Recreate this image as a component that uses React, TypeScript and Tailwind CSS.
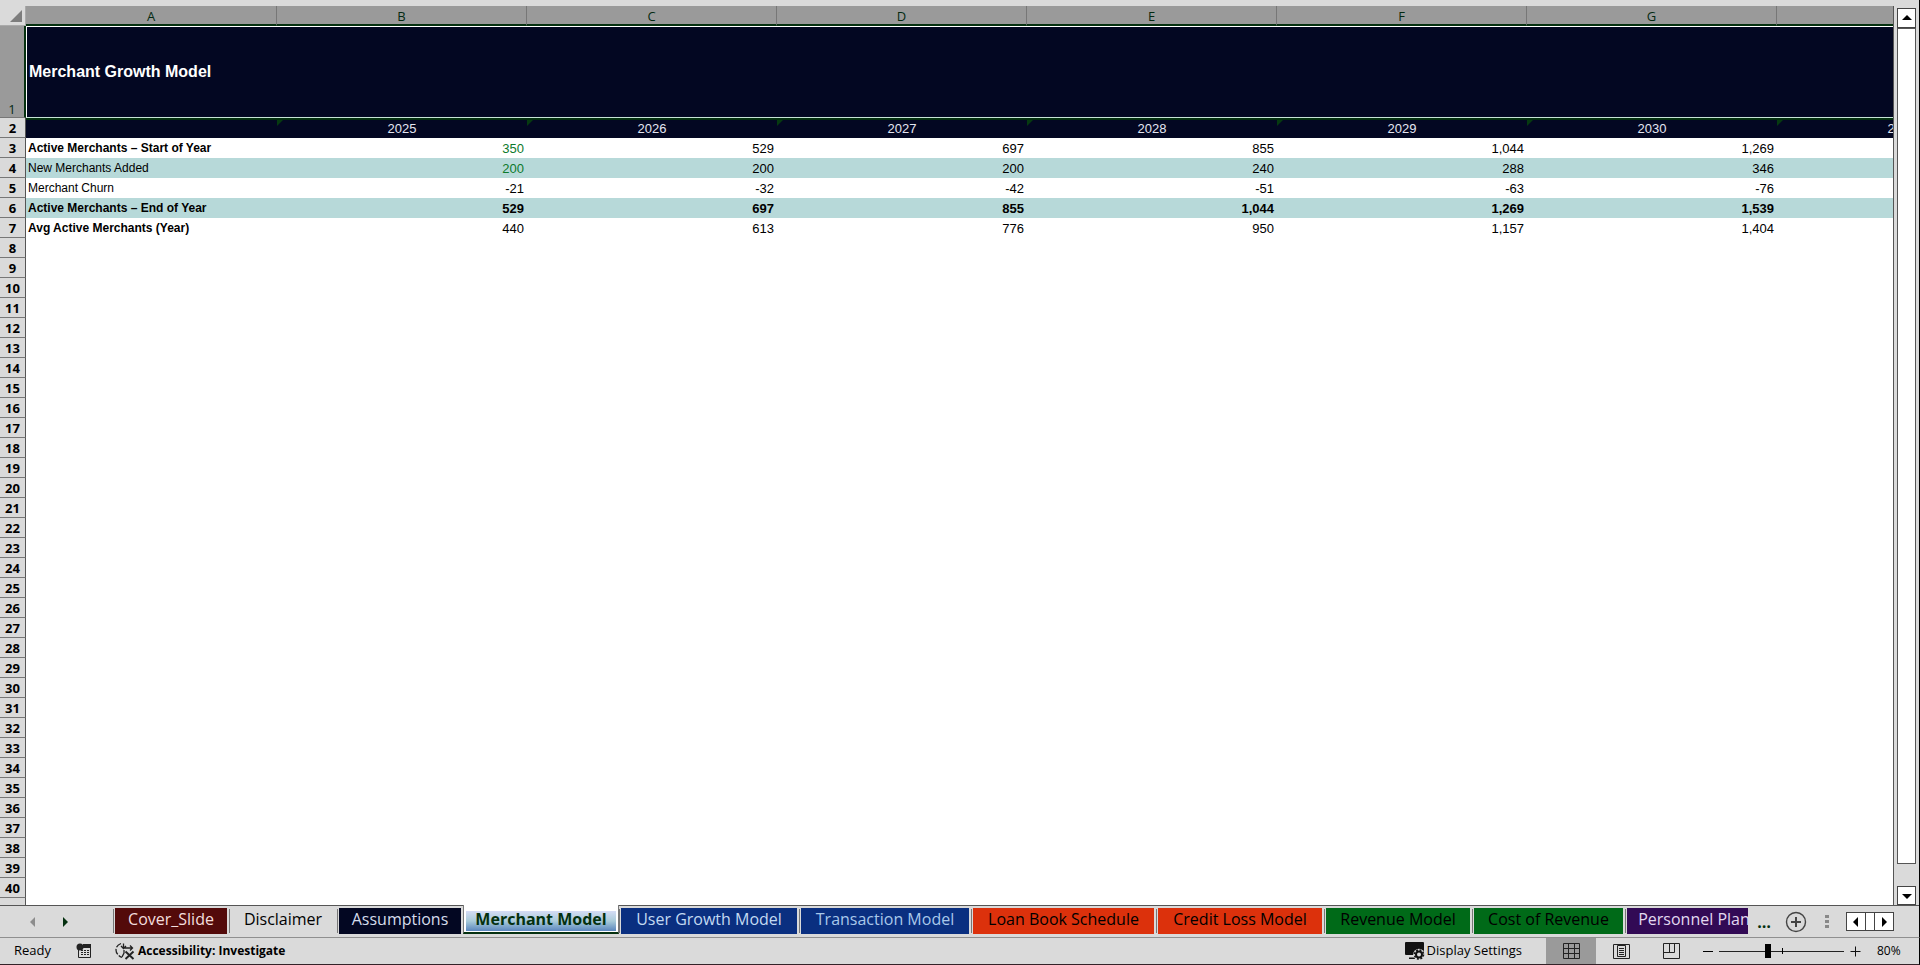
import { useState } from 'react'
import clsx from 'clsx'

type Row = {
  label: string
  values: string[]
  boldLabel?: boolean
  bold?: boolean
  banded?: boolean
  input?: boolean
}

const columns = ['A', 'B', 'C', 'D', 'E', 'F', 'G', 'H']
const years = ['2025', '2026', '2027', '2028', '2029', '2030', '2031']

const rows: Row[] = [
  { label: 'Active Merchants – Start of Year', values: ['350', '529', '697', '855', '1,044', '1,269'], boldLabel: true, input: true },
  { label: 'New Merchants Added', values: ['200', '200', '200', '240', '288', '346'], banded: true, input: true },
  { label: 'Merchant Churn', values: ['-21', '-32', '-42', '-51', '-63', '-76'] },
  { label: 'Active Merchants – End of Year', values: ['529', '697', '855', '1,044', '1,269', '1,539'], boldLabel: true, bold: true, banded: true },
  { label: 'Avg Active Merchants (Year)', values: ['440', '613', '776', '950', '1,157', '1,404'], boldLabel: true },
]

const emptyRows = Array.from({ length: 34 }, (_, i) => i + 8)

const tabs = [
  { name: 'Cover_Slide', style: 'w-28 bg-[#530a0a] text-[#f3dede]' },
  { name: 'Disclaimer', style: 'w-[104px] text-black' },
  { name: 'Assumptions', style: 'w-[122px] bg-[#030722] text-[#d5dcec]' },
  { name: 'Merchant Model', style: 'w-[152px]' },
  { name: 'User Growth Model', style: 'w-44 bg-[#0a2f80] text-[#c3daf2]' },
  { name: 'Transaction Model', style: 'w-42 bg-[#0a2f80] text-[#a9c8ea]' },
  { name: 'Loan Book Schedule', style: 'w-[181px] bg-[#dc310c] text-black font-medium' },
  { name: 'Credit Loss Model', style: 'w-[164px] bg-[#dc310c] text-black font-medium' },
  { name: 'Revenue Model', style: 'w-36 bg-[#006a18] text-black font-medium' },
  { name: 'Cost of Revenue', style: 'w-[149px] bg-[#006a18] text-black font-medium' },
  { name: 'Personnel Plan', style: 'w-[134px] bg-[#320a55] text-[#e2d9f0]' },
]

function Arrow({ dir, className }: { dir: 'up' | 'down' | 'left' | 'right'; className?: string }) {
  const points = {
    up: '0,7 5,2 10,7',
    down: '0,3 5,8 10,3',
    left: '7,0 2,5 7,10',
    right: '3,0 8,5 3,10',
  }
  return (
    <svg viewBox="0 0 10 10" className={clsx('size-2.5', className)} fill="currentColor" aria-hidden>
      <polygon points={points[dir]} />
    </svg>
  )
}

function RowHead({ n, last }: { n: number; last?: boolean }) {
  return (
    <th
      scope="row"
      className={clsx(
        'h-5 border-r border-[#555] bg-[#dadada] px-0 pt-px pb-0 text-center font-[Open_Sans,sans-serif] text-[13px] leading-[18px] font-bold text-black',
        !last && 'border-b border-b-[#777]',
      )}
    >
      {n}
    </th>
  )
}

function Grid() {
  return (
    <table className="w-[2026px] table-fixed border-separate border-spacing-0">
      <colgroup>
        <col className="w-[26px]" />
        <col className="w-[251px]" />
        {years.map((y) => (
          <col key={y} className="w-[250px]" />
        ))}
      </colgroup>
      <thead>
        <tr>
          <th className="h-5 border-r border-b border-[#aaa] bg-[#dadada] p-0">
            <svg viewBox="0 0 12 12" className="ml-2.5 size-3" fill="#7d7d7d" aria-label="Select all">
              <polygon points="12,0 12,12 0,12" />
            </svg>
          </th>
          {columns.map((c) => (
            <th
              key={c}
              scope="col"
              className="h-5 border-r border-b-2 border-r-[#777] border-b-[#04300f] bg-[#9a9a9a] px-0 pt-0.5 pb-0 text-center font-[Open_Sans,sans-serif] text-[13px] leading-4 font-normal text-[#042a12]"
            >
              {c}
            </th>
          ))}
        </tr>
      </thead>
      <tbody>
        <tr>
          <th
            scope="row"
            className="h-[92px] border-r-2 border-b border-r-[#04300f] border-b-[#777] bg-[#9a9a9a] p-0 text-center align-bottom font-[Open_Sans,sans-serif] text-[13px] leading-4 font-normal text-[#042a12]"
          >
            1
          </th>
          <td
            colSpan={8}
            className="border-y border-l border-t-white border-b-[#c5e3d5] border-l-white bg-[#030722] px-0.5 py-0 text-base leading-5 font-bold text-white"
          >
            Merchant Growth Model
          </td>
        </tr>
        <tr className="bg-[#030722] text-[#e3e6f2]">
          <RowHead n={2} />
          <td className="border-t-2 border-[#04300f] p-0" />
          {years.map((y) => (
            <td key={y} className="relative border-t-2 border-[#04300f] p-0 text-center text-[13px] leading-4">
              <span className="absolute top-0 left-0 size-1.5 bg-[#063a10] [clip-path:polygon(0_0,100%_0,0_100%)]" />
              {y}
            </td>
          ))}
        </tr>
        {rows.map((row, i) => (
          <tr key={row.label} className={clsx('text-[13px] leading-[19px]', row.banded && 'bg-[#b7d9d9]')}>
            <RowHead n={i + 3} />
            <td
              className={clsx(
                'pt-px pr-0 pb-0 pl-0.5 text-xs leading-[19px] whitespace-nowrap',
                row.boldLabel && 'font-bold',
              )}
            >
              {row.label}
            </td>
            {row.values.map((v, j) => (
              <td
                key={j}
                className={clsx(
                  'py-0 pr-[3px] pl-0 text-right',
                  row.bold && 'font-bold',
                  row.input && j === 0 && 'text-[#0e7a2c]',
                )}
              >
                {v}
              </td>
            ))}
            <td className="p-0" />
          </tr>
        ))}
        {emptyRows.map((n) => (
          <tr key={n}>
            <RowHead n={n} last={n === 41} />
            <td colSpan={8} className="p-0" />
          </tr>
        ))}
      </tbody>
    </table>
  )
}

function VerticalScroll() {
  return (
    <div className="flex w-[26px] shrink-0 flex-col border-r border-black bg-[#dadada] pt-2 pr-[3px] pl-[3px]">
      <button aria-label="Scroll up" className="flex h-5 shrink-0 items-center justify-center border border-[#444] bg-white">
        <Arrow dir="up" />
      </button>
      <div className="h-[837px] shrink border border-[#555] bg-white" />
      <div className="min-h-[22px] flex-1" />
      <button aria-label="Scroll down" className="flex h-[19px] shrink-0 items-center justify-center border border-[#444] bg-white">
        <Arrow dir="down" />
      </button>
    </div>
  )
}

function SheetTabs() {
  const [active, setActive] = useState('Merchant Model')
  return (
    <div className="flex h-[33px] shrink-0 border-r border-b border-r-black border-b-[#8f8f8f]">
      <div className="flex w-[113px] shrink-0 items-center gap-[22px] border-t border-[#555] pl-7">
        <button aria-label="Previous sheet" className="text-[#8d8d8d]">
          <Arrow dir="left" />
        </button>
        <button aria-label="Next sheet" className="text-[#04300f]">
          <Arrow dir="right" />
        </button>
      </div>
      <div className="flex min-w-0 flex-1 overflow-hidden">
        {tabs.map((t) =>
          t.name === active ? (
            <button
              key={t.name}
              className="flex h-[29px] shrink-0 justify-center border-x border-b-2 border-x-[#777] border-b-[#04300f] bg-white px-0.5 pt-1.5 pb-px text-base leading-4 font-bold text-[#04300f]"
            >
              <span className="h-5 w-[150px] bg-linear-to-b from-[#d5dcf5] via-[#a9cbd9] to-[#5b86bd]">{t.name}</span>
            </button>
          ) : (
            <div key={t.name} className="flex shrink-0 border-t border-[#555] pt-0.5">
              <span className="mt-px mr-px mb-1 w-px bg-[#777]" />
              <button
                onClick={() => setActive(t.name)}
                className={clsx('mr-0.5 h-[26px] overflow-hidden pb-1 text-base leading-[22px] whitespace-nowrap', t.style)}
              >
                {t.name}
              </button>
            </div>
          ),
        )}
      </div>
      <div className="flex w-[171px] shrink-0 items-center border-t border-[#555]">
        <button aria-label="More sheets" className="ml-1.5 w-5 text-base leading-4 font-bold text-[#04300f]">…</button>
        <button aria-label="New sheet" className="ml-[11px] text-[#444]">
          <svg viewBox="0 0 22 22" className="size-[22px]" fill="none" stroke="currentColor" aria-hidden>
            <circle cx="11" cy="11" r="9.5" strokeWidth="1.4" />
            <path d="M11 6v10M6 11h10" strokeWidth="2" />
          </svg>
        </button>
        <span className="ml-[18px] flex flex-col gap-0.5">
          <i className="h-[3px] w-1 bg-[#888]" />
          <i className="h-[3px] w-1 bg-[#888]" />
          <i className="h-[3px] w-1 bg-[#888]" />
        </span>
        <div className="ml-[17px] flex h-[19px] w-12 border border-[#444] bg-white">
          <button aria-label="Scroll left" className="flex w-[18px] items-center justify-center">
            <Arrow dir="left" />
          </button>
          <span className="flex-1 border-x border-[#444]" />
          <button aria-label="Scroll right" className="flex w-[18px] items-center justify-center">
            <Arrow dir="right" />
          </button>
        </div>
      </div>
    </div>
  )
}

const slider =
  'h-4 w-[125px] appearance-none bg-[linear-gradient(#222,#222)] bg-[length:100%_1px] bg-center bg-no-repeat [&::-webkit-slider-thumb]:h-3.5 [&::-webkit-slider-thumb]:w-1.5 [&::-webkit-slider-thumb]:appearance-none [&::-webkit-slider-thumb]:bg-black'

function StatusBar() {
  const [zoom, setZoom] = useState(80)
  // the track is split so that 100% sits in the middle
  const pos = zoom <= 100 ? (zoom - 10) / 1.8 : 50 + (zoom - 100) / 6
  return (
    <div className="flex h-[27px] shrink-0 items-center border-r border-b border-r-black border-b-[#332228] text-[13px] text-black">
      <span className="ml-3.5 w-[62px]">Ready</span>
      <button aria-label="Record macro">
        <svg viewBox="0 0 16 16" className="size-4" fill="none" stroke="#222" aria-hidden>
          <path d="M2.5 6v8.500h12v-12" />
          <path d="M7 1h8v4H7z" fill="#222" stroke="none" />
          <path d="M5 7.500h8M5 9.500h8M5 11.500h8" strokeDasharray="2 1" />
          <circle cx="4" cy="4" r="3.500" fill="#222" stroke="none" />
        </svg>
      </button>
      <button className="ml-[23px] flex items-center gap-[3px] font-bold">
        <svg viewBox="0 0 20 18" className="h-[18px] w-5" fill="none" stroke="#222" strokeWidth="1.300" aria-hidden>
          <path d="M6 1.500Q1 3.500 1 8t6 7.500" strokeDasharray="6 1.500" />
          <path d="M8.500 1.500v4.500h9M15 3.500l2.500 2.500L15 8.500M6 4l2.500 2.500L11 4M9 8v3l-2 4" />
          <path d="M10.500 9.500l8 7.500M18.500 9.500l-8 7.500" strokeWidth="1.900" />
        </svg>
        <span className="text-xs">Accessibility: Investigate</span>
      </button>
      <button className="ml-auto flex items-center gap-0.5 text-[13px]">
        <svg viewBox="0 0 20 18" className="h-[18px] w-5" aria-hidden>
          <path d="M1 0h17a1 1 0 0 1 1 1v12H1a1 1 0 0 1-1-1V1a1 1 0 0 1 1-1zM4 15.500h6v1.500H4z" fill="#111" />
          <circle cx="14" cy="12.500" r="5.800" fill="#dadada" />
          <circle cx="14" cy="12.500" r="3" fill="none" stroke="#111" strokeWidth="2" />
          <circle cx="14" cy="12.500" r="4.500" fill="none" stroke="#111" strokeWidth="1.600" strokeDasharray="1.900 1.634" />
        </svg>
        Display Settings
      </button>
      <div className="ml-6 flex h-full">
        <button aria-label="Normal view" className="flex w-[50px] items-center justify-center bg-[#9a9a9a]">
          <svg viewBox="0 0 17 17" className="size-[17px]" fill="none" stroke="#222" aria-hidden>
            <path d="M.5.500h16v15H.5zM.5 5.500h16M.5 10.500h16M5.500.500v15M11.500.500v15" />
          </svg>
        </button>
        <button aria-label="Page layout" className="flex w-[50px] items-center justify-center">
          <svg viewBox="0 0 17 17" className="size-[17px]" fill="none" stroke="#222" aria-hidden>
            <path d="M.5 1.500h16v14H.5zM4.500 2.500h8v11h-8zM6 5.500h5M6 7.500h5M6 9.500h5M6 11.500h5" />
          </svg>
        </button>
        <button aria-label="Page break preview" className="flex w-[50px] items-center justify-center">
          <svg viewBox="0 0 17 17" className="size-[17px]" fill="none" stroke="#222" aria-hidden>
            <path d="M.5.500h16v15H.5zM.5 9.500h11v-9M6.500.500v9" />
          </svg>
        </button>
      </div>
      <button aria-label="Zoom out" className="ml-[7px] h-px w-2.5 bg-black" />
      <div className="relative ml-1.5 flex items-center">
        <span className="absolute left-1/2 h-1.5 w-px bg-black" />
        <input
          type="range"
          aria-label="Zoom"
          min={0}
          max={100}
          value={pos}
          onChange={(e) => {
            const p = Number(e.target.value)
            setZoom(Math.round(p <= 50 ? 10 + p * 1.8 : 100 + (p - 50) * 6))
          }}
          className={slider}
        />
      </div>
      <button aria-label="Zoom in" className="ml-1.5">
        <svg viewBox="0 0 11 11" className="size-[11px]" stroke="#111" aria-hidden>
          <path d="M5.500.500v10M.5 5.500h10" />
        </svg>
      </button>
      <span className="ml-4 w-[42px] text-xs">{zoom}%</span>
    </div>
  )
}

export default function App() {
  return (
    <div className="flex h-screen flex-col overflow-hidden bg-[#dadada] font-[Open_Sans,sans-serif]">
      <div className="flex min-h-0 flex-1">
        <div className="flex min-w-0 flex-1 flex-col pt-1.5">
          <div className="min-h-0 flex-1 overflow-hidden border-r border-[#555] bg-white font-[Liberation_Sans,Arial,sans-serif] text-black">
            <Grid />
          </div>
        </div>
        <VerticalScroll />
      </div>
      <SheetTabs />
      <StatusBar />
    </div>
  )
}
